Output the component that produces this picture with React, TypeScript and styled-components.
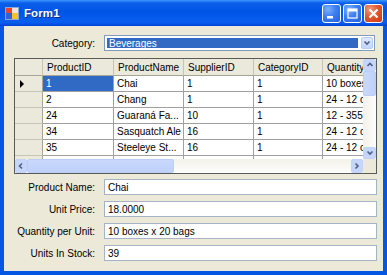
import { Fragment } from 'react';
import styled, { createGlobalStyle } from 'styled-components';

const GlobalStyle = createGlobalStyle`
  html, body {
    margin: 0;
    padding: 0;
    background: #ffffff;
    overflow: hidden;
  }
  body {
    font-family: "Liberation Sans", Arial, sans-serif;
    font-size: 10px;
    color: #000;
  }
`;

const Window = styled.div`
  width: 387px;
  height: 275px;
  display: flex;
  flex-direction: column;
  overflow: hidden;
`;

const TitleBar = styled.div`
  height: 26px;
  flex: none;
  display: flex;
  align-items: center;
  padding: 0 4px 0 5px;
  box-sizing: border-box;
  background: linear-gradient(
    180deg,
    #3d95ff 0%,
    #0a5fe8 12%,
    #0054e6 45%,
    #0a5fef 85%,
    #0553e8 92%,
    #0040d0 100%
  );
`;

const Title = styled.span`
  flex: 1;
  margin-left: 4px;
  color: #fff;
  font-weight: bold;
  font-size: 11.5px;
  text-shadow: 1px 1px 0 #0a2a8a;
  letter-spacing: 0.1px;
`;

const TitleButtons = styled.div`
  display: flex;
  gap: 2px;
`;

const TitleButton = styled.div<{ $close?: boolean }>`
  width: 19px;
  height: 19px;
  box-sizing: border-box;
  border: 1px solid #ffffff;
  border-radius: 3px;
  display: flex;
  align-items: center;
  justify-content: center;
  background: ${(p) =>
    p.$close
      ? 'radial-gradient(circle at 30% 25%, #f29a7c 0%, #e2582f 45%, #c63a15 100%)'
      : 'radial-gradient(circle at 30% 25%, #7ab0ff 0%, #3d7ef0 45%, #2360dc 100%)'};
`;

const Client = styled.div`
  flex: 1;
  display: flex;
  flex-direction: column;
  background: #ece9d8;
  border: 4px solid #0656e4;
  border-top: none;
  padding: 9px 6px 0 0;
`;

const FieldRow = styled.div`
  display: grid;
  grid-template-columns: 91px 1fr;
  column-gap: 9px;
  align-items: center;
  height: 16px;
`;

const Label = styled.label`
  text-align: right;
  white-space: nowrap;
`;

const ComboBox = styled.div`
  height: 16px;
  box-sizing: border-box;
  border: 1px solid #7f9db9;
  background: #fff;
  display: flex;
  align-items: stretch;
  padding: 1px;
  margin-right: 2px;
`;

const ComboValue = styled.div`
  flex: 1;
  margin: 1px 3px 1px 1px;
  padding-left: 2px;
  background: #316ac5;
  color: #fff;
  display: flex;
  align-items: center;
`;

const DropButton = styled.div`
  width: 12px;
  box-sizing: border-box;
  border: 1px solid #bacbf5;
  border-radius: 2px;
  background: linear-gradient(180deg, #dfe8fd 0%, #c4d4fa 100%);
  display: flex;
  align-items: center;
  justify-content: center;
`;

const GridFrame = styled.div`
  margin: 7px 0 0 10px;
  height: 116px;
  box-sizing: border-box;
  border: 1px solid #5a5a5a;
  display: grid;
  grid-template-columns: 1fr 13px;
  grid-template-rows: 1fr 14px;
  background: #fff;
  overflow: hidden;
`;

const Viewport = styled.div`
  overflow: hidden;
  background: #ababab;
`;

const Table = styled.div`
  display: grid;
  grid-template-columns: 28px 71px 70px 70px 69px 100px;
  grid-auto-rows: 16px;
  grid-template-rows: 17px;
  width: 408px;
`;

const HeaderCell = styled.div`
  box-sizing: border-box;
  background: #ebe9dc;
  border-right: 1px solid #c7c4b3;
  border-bottom: 1px solid #a7a594;
  padding-left: 4px;
  display: flex;
  align-items: center;
  white-space: nowrap;
  overflow: hidden;
`;

const RowHeader = styled.div`
  box-sizing: border-box;
  background: #ebe9dc;
  border-right: 1px solid #a7a594;
  border-bottom: 1px solid #c7c4b3;
  display: flex;
  align-items: center;
  padding-left: 5px;
`;

const Cell = styled.div<{ $selected?: boolean }>`
  box-sizing: border-box;
  border-right: 1px solid #a0a0a0;
  border-bottom: 1px solid #a0a0a0;
  padding-left: 3px;
  display: flex;
  align-items: center;
  white-space: nowrap;
  overflow: hidden;
  background: ${(p) => (p.$selected ? '#316ac5' : '#fff')};
  color: ${(p) => (p.$selected ? '#fff' : '#000')};
`;

const VScroll = styled.div`
  display: flex;
  flex-direction: column;
  background: linear-gradient(90deg, #f3f1ea 0%, #fdfdfb 100%);
`;

const HScroll = styled.div`
  display: flex;
  background: linear-gradient(180deg, #f3f1ea 0%, #fdfdfb 100%);
`;

const ScrollButton = styled.div<{ $vertical?: boolean }>`
  flex: none;
  width: ${(p) => (p.$vertical ? '13px' : '12px')};
  height: ${(p) => (p.$vertical ? '12px' : '14px')};
  box-sizing: border-box;
  border: 1px solid #c3d3fa;
  border-radius: 2px;
  background: #c6d6fb;
  display: flex;
  align-items: center;
  justify-content: center;
`;

const Thumb = styled.div<{ $vertical?: boolean }>`
  flex: none;
  box-sizing: border-box;
  border: 1px solid #bccdf6;
  border-radius: 2px;
  background: ${(p) =>
    p.$vertical
      ? 'linear-gradient(90deg, #c9d8fc 0%, #bfd1fa 100%)'
      : 'linear-gradient(180deg, #c9d8fc 0%, #bfd1fa 100%)'};
`;

const Track = styled.div`
  flex: 1;
`;

const Corner = styled.div`
  background: #ece9d8;
`;

const Fields = styled.div`
  margin-top: 5px;
  display: flex;
  flex-direction: column;
  gap: 6px;
`;

const TextBox = styled.div`
  height: 16px;
  box-sizing: border-box;
  border: 1px solid #a5b3c4;
  background: #fff;
  padding-left: 3px;
  display: flex;
  align-items: center;
  white-space: nowrap;
`;

const columns = ['ProductID', 'ProductName', 'SupplierID', 'CategoryID', 'Quantity'];

const rows = [
  ['1', 'Chai', '1', '1', '10 boxes x 20 bags'],
  ['2', 'Chang', '1', '1', '24 - 12 oz bottles'],
  ['24', 'Guaraná Fa...', '10', '1', '12 - 355 ml cans'],
  ['34', 'Sasquatch Ale', '16', '1', '24 - 12 oz bottles'],
  ['35', 'Steeleye St...', '16', '1', '24 - 12 oz bottles'],
  ['38', 'Côte de Bl...', '18', '1', '12 - 75 cl bottles'],
];

const fields = [
  ['Product Name:', 'Chai'],
  ['Unit Price:', '18.0000'],
  ['Quantity per Unit:', '10 boxes x 20 bags'],
  ['Units In Stock:', '39'],
];

const Arrow = ({ dir }: { dir: 'up' | 'down' | 'left' | 'right' }) => {
  const pts = {
    up: '1.5,5 4,2.5 6.5,5',
    down: '1.5,2.5 4,5 6.5,2.5',
    left: '5,1.5 2.5,4 5,6.5',
    right: '2.5,1.5 5,4 2.5,6.5',
  }[dir];
  return (
    <svg width="8" height="8" viewBox="0 0 8 8">
      <polyline points={pts} fill="none" stroke="#4d6185" strokeWidth="1.6" />
    </svg>
  );
};

const FormIcon = () => (
  <svg width="15" height="15" viewBox="0 0 15 15">
    <rect x="0.5" y="1.5" width="13" height="12" fill="#fff" stroke="#8aa7d8" />
    <rect x="1" y="2" width="6" height="5" fill="#e8452c" />
    <rect x="7" y="2" width="6" height="5" fill="#e9e4dc" />
    <rect x="1" y="7" width="6" height="6" fill="#2f64d8" />
    <rect x="7" y="7" width="6" height="6" fill="#f5c22a" />
  </svg>
);

export default function App() {
  return (
    <>
      <GlobalStyle />
      <Window>
        <TitleBar>
          <FormIcon />
          <Title>Form1</Title>
          <TitleButtons>
            <TitleButton>
              <svg width="17" height="17" viewBox="0 0 17 17">
                <rect x="4" y="11" width="6" height="2.5" fill="#fff" />
              </svg>
            </TitleButton>
            <TitleButton>
              <svg width="17" height="17" viewBox="0 0 17 17">
                <rect x="4" y="4" width="9" height="9" fill="none" stroke="#fff" strokeWidth="1.2" />
                <rect x="4" y="4" width="9" height="2.5" fill="#fff" />
              </svg>
            </TitleButton>
            <TitleButton $close>
              <svg width="17" height="17" viewBox="0 0 17 17">
                <path d="M4.5 4.5 L12.5 12.5 M12.5 4.5 L4.5 12.5" stroke="#fff" strokeWidth="2.2" />
              </svg>
            </TitleButton>
          </TitleButtons>
        </TitleBar>

        <Client>
          <FieldRow>
            <Label>Category:</Label>
            <ComboBox>
              <ComboValue>Beverages</ComboValue>
              <DropButton>
                <Arrow dir="down" />
              </DropButton>
            </ComboBox>
          </FieldRow>

          <GridFrame>
            <Viewport>
              <Table>
                <HeaderCell />
                {columns.map((c) => (
                  <HeaderCell key={c}>{c}</HeaderCell>
                ))}
                {rows.map((r, i) => (
                  <Fragment key={i}>
                    <RowHeader>
                      {i === 0 && (
                        <svg width="5" height="8" viewBox="0 0 5 8">
                          <polygon points="0,0 4,4 0,8" fill="#000" />
                        </svg>
                      )}
                    </RowHeader>
                    {r.map((v, j) => (
                      <Cell key={j} $selected={i === 0 && j === 0}>
                        {v}
                      </Cell>
                    ))}
                  </Fragment>
                ))}
              </Table>
            </Viewport>
            <VScroll>
              <ScrollButton $vertical>
                <Arrow dir="up" />
              </ScrollButton>
              <Thumb $vertical style={{ height: 25 }} />
              <Track />
              <ScrollButton $vertical>
                <Arrow dir="down" />
              </ScrollButton>
            </VScroll>
            <HScroll>
              <ScrollButton>
                <Arrow dir="left" />
              </ScrollButton>
              <Thumb style={{ width: 147 }} />
              <Track />
              <ScrollButton>
                <Arrow dir="right" />
              </ScrollButton>
            </HScroll>
            <Corner />
          </GridFrame>

          <Fields>
            {fields.map(([label, value]) => (
              <FieldRow key={label}>
                <Label>{label}</Label>
                <TextBox>{value}</TextBox>
              </FieldRow>
            ))}
          </Fields>
        </Client>
      </Window>
    </>
  );
}
